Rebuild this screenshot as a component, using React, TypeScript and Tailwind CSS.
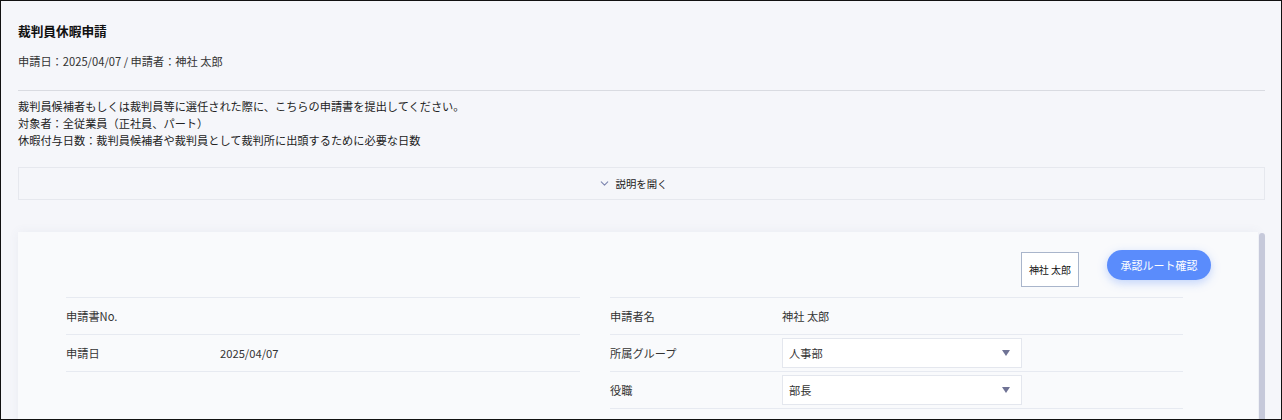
import React from 'react';
import { ChevronDown } from 'lucide-react';

const font = { fontFamily: '"Noto Sans CJK JP", "Liberation Sans", sans-serif' };

const Select: React.FC<{ value: string }> = ({ value }) => (
  <div className="flex items-center justify-between w-[240px] h-[30px] bg-white border border-[#e4e7ee] pl-[6px] pr-[11px] text-[11.2px] text-[#333]">
    <span>{value}</span>
    <span className="w-0 h-0 border-l-[4px] border-r-[4px] border-t-[6px] border-l-transparent border-r-transparent border-t-[#6f7395]" />
  </div>
);

const Row: React.FC<{ label: string; labelW: string; children?: React.ReactNode }> = ({
  label,
  labelW,
  children,
}) => (
  <div className="flex items-center h-[37px] border-b border-[#e7eaf1] text-[11.2px] text-[#333]">
    <div className={`${labelW} shrink-0`}>{label}</div>
    <div className="flex-1 flex items-center">{children}</div>
  </div>
);

export default function App() {
  return (
    <div
      style={font}
      className="h-[420px] w-full overflow-hidden border border-[#111] bg-[#f5f6fa] pl-[17px] pr-[16px]"
    >
      <h1 className="pt-[20px] text-[12.7px] leading-[20px] font-bold text-[#111]">裁判員休暇申請</h1>
      <p className="mt-[12px] text-[11.2px] leading-[17px] text-[#333]">
        申請日：2025/04/07 / 申請者：神社 太郎
      </p>
      <div className="mt-[20px] h-px bg-[#d9dbe1]" />
      <div className="mt-[7px] text-[11.2px] leading-[17px] text-[#222]">
        <p>裁判員候補者もしくは裁判員等に選任された際に、こちらの申請書を提出してください。</p>
        <p>対象者：全従業員（正社員、パート）</p>
        <p>休暇付与日数：裁判員候補者や裁判員として裁判所に出頭するために必要な日数</p>
      </div>

      <div className="mt-[18px] h-[33px] border border-[#e6e8ee] flex items-center justify-center gap-[5px] pr-[18px] text-[10.4px] text-[#222]">
        <ChevronDown className="w-[13px] h-[13px] text-[#7e86b0]" strokeWidth={2} />
        <span>説明を開く</span>
      </div>

      <div className="mt-[32px] flex gap-[1px]">
        <div className="flex-1 h-[200px] bg-[#f9fafc] shadow-[0_0_10px_rgba(90,100,140,0.07)]">
          <div className="flex justify-end items-start gap-[28px] pt-[18px] pr-[47px] h-[65px]">
            <div className="mt-[2px] w-[58px] h-[35px] bg-white border border-[#a9b5cb] flex items-center justify-center text-[10px] text-[#111]">
              神社 太郎
            </div>
            <button className="w-[104px] h-[30px] rounded-full bg-[#5a8cfc] text-white text-[11px] shadow-[0_3px_10px_rgba(90,140,252,0.35)]">
              承認ルート確認
            </button>
          </div>

          <div className="flex pl-[48px] gap-[30px]">
            <div className="w-[514px] border-t border-[#e7eaf1]">
              <Row label="申請書No." labelW="w-[154px]" />
              <Row label="申請日" labelW="w-[154px]">
                2025/04/07
              </Row>
            </div>
            <div className="w-[573px] border-t border-[#e7eaf1]">
              <Row label="申請者名" labelW="w-[172px]">
                神社 太郎
              </Row>
              <Row label="所属グループ" labelW="w-[172px]">
                <Select value="人事部" />
              </Row>
              <Row label="役職" labelW="w-[172px]">
                <Select value="部長" />
              </Row>
            </div>
          </div>
        </div>
        <div className="w-[6px] mt-[1px] h-[200px] rounded-t-full bg-[#c6c9da]" />
      </div>
    </div>
  );
}
